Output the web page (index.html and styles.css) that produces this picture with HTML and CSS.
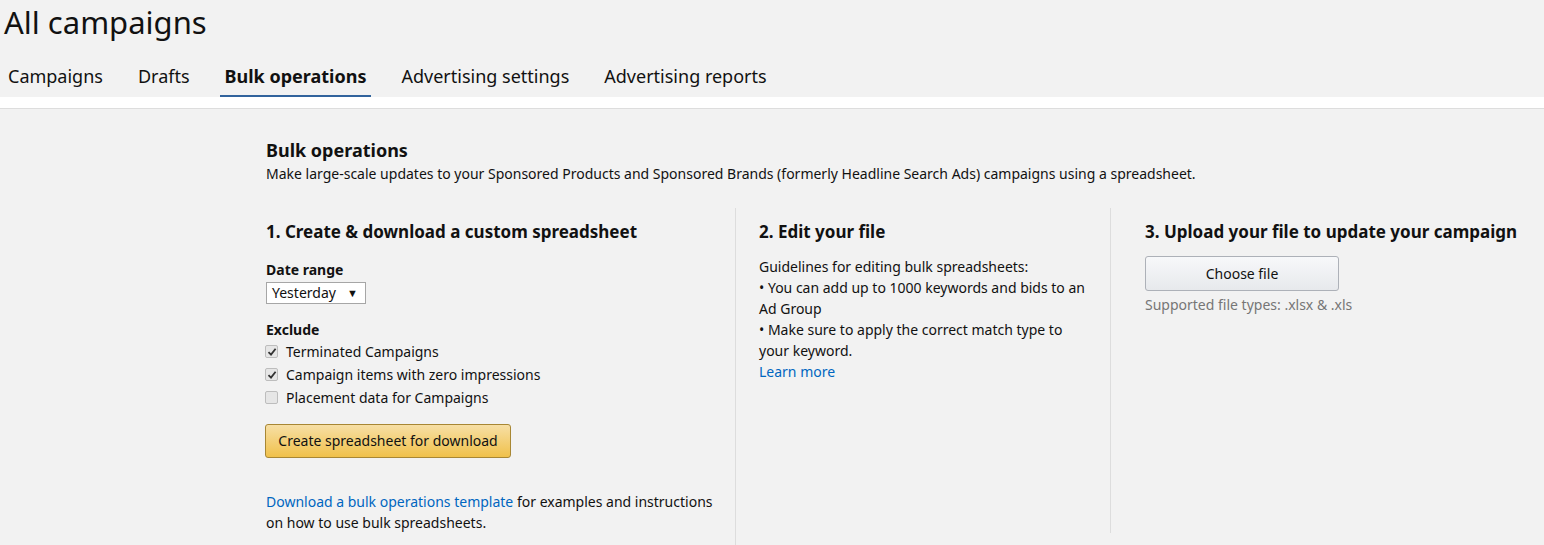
FILE: index.html
```html
<!DOCTYPE html>
<html lang="en">
<head>
<meta charset="utf-8">
<title>All campaigns</title>
<link rel="stylesheet" href="styles.css">
</head>
<body>
<header class="page-header">
  <h1 class="page-title">All campaigns</h1>
  <nav class="tabs">
    <a class="tab">Campaigns</a>
    <a class="tab">Drafts</a>
    <a class="tab tab-active">Bulk operations</a>
    <a class="tab">Advertising settings</a>
    <a class="tab">Advertising reports</a>
  </nav>
</header>
<div class="band"></div>
<main class="content">
  <h2 class="section-title">Bulk operations</h2>
  <p class="section-desc">Make large-scale updates to your Sponsored Products and Sponsored Brands (formerly Headline Search Ads) campaigns using a spreadsheet.</p>
  <div class="columns">
    <section class="col col-1">
      <h3 class="col-title">1. Create &amp; download a custom spreadsheet</h3>
      <div class="field-label">Date range</div>
      <div class="select"><span>Yesterday</span><span class="arrow">&#9660;</span></div>
      <div class="field-label exclude">Exclude</div>
      <div class="check-row"><span class="box checked"><svg viewBox="0 0 10 10" width="10" height="10"><path d="M1.5 5.2 L4 7.6 L8.6 1.8" fill="none" stroke="#333" stroke-width="1.8"/></svg></span>Terminated Campaigns</div>
      <div class="check-row"><span class="box checked"><svg viewBox="0 0 10 10" width="10" height="10"><path d="M1.5 5.2 L4 7.6 L8.6 1.8" fill="none" stroke="#333" stroke-width="1.8"/></svg></span>Campaign items with zero impressions</div>
      <div class="check-row"><span class="box"></span>Placement data for Campaigns</div>
      <button class="btn-primary">Create spreadsheet for download</button>
      <p class="template"><a class="link">Download a bulk operations template</a> for examples and instructions on how to use bulk spreadsheets.</p>
    </section>
    <section class="col col-2">
      <h3 class="col-title">2. Edit your file</h3>
      <p class="guide">Guidelines for editing bulk spreadsheets:<br>&bull; You can add up to 1000 keywords and bids to an Ad Group<br>&bull; Make sure to apply the correct match type to your keyword.<br><a class="link">Learn more</a></p>
    </section>
    <section class="col col-3">
      <h3 class="col-title">3. Upload your file to update your campaign</h3>
      <button class="btn-secondary">Choose file</button>
      <p class="hint">Supported file types: .xlsx &amp; .xls</p>
    </section>
  </div>
</main>
</body>
</html>
```
FILE: styles.css
```css
* { box-sizing: border-box; }
html, body { margin: 0; padding: 0; }
body {
  background: #f2f2f2;
  color: #111;
  font-family: "Noto Sans", "Open Sans", Arial, sans-serif;
  font-size: 14px;
  line-height: 20px;
  overflow: hidden;
}
.page-header { padding: 0 0 0 3px; }
.page-title {
  margin: 0;
  padding-left: 1px;
  font-size: 31px;
  font-weight: 400;
  line-height: 44px;
}
.tabs { display: flex; gap: 25px; margin-top: 13px; }
.tab {
  padding: 8px 5px 8px;
  font-size: 18px;
  line-height: 22px;
  color: #111;
  border-bottom: 2px solid transparent;
}
.tab-active { font-weight: 700; border-bottom-color: #31639c; }
.band { height: 12px; background: #fff; border-bottom: 1px solid #ddd; }
.content { padding: 29px 0 0 266px; }
.section-title { margin: 0; font-size: 18px; line-height: 24px; font-weight: 700; }
.section-desc { margin: 2px 0 0; }
.columns { display: flex; align-items: flex-start; margin-top: 24px; }
.col { padding-top: 12px; }
.col-1 { width: 470px; padding-right: 20px; padding-bottom: 24px; border-right: 1px solid #ddd; }
.col-2 { width: 375px; min-height: 325px; padding-left: 23px; padding-right: 16px; border-right: 1px solid #ddd; }
.col-3 { padding-left: 34px; }
.col-title { margin: 0 0 12px; font-size: 17px; line-height: 24px; font-weight: 700; }
.field-label { font-weight: 700; margin-top: 16px; }
.exclude { margin-top: 16px; }
.select {
  display: flex; align-items: center; justify-content: space-between;
  width: 100px; height: 22px; margin-top: 2px; padding: 0 7px 0 5px;
  background: #fff; border: 1px solid #a6a6a6;
}
.arrow { font-size: 11px; color: #111; }
.check-row { display: flex; align-items: center; height: 23px; }
.box {
  display: inline-flex; align-items: center; justify-content: center;
  width: 13px; height: 13px; margin: 0 8px 0 -1px;
  border: 1px solid #bdbdbd; border-radius: 2px; background: #e6e6e6;
}
.btn-primary {
  display: block; margin-top: 15px; width: 246px; height: 34px; margin-left: -1px;
  font: inherit; color: #111;
  background: linear-gradient(#f7dfa5, #f0c14b);
  border: 1px solid #a88734; border-radius: 3px;
}
.template { margin: 33px 0 0; line-height: 21px; }
.link { color: #0066c0; }
.guide { margin: 0; line-height: 21px; }
.btn-secondary {
  display: block; margin-top: 1px; width: 194px; height: 35px;
  font: inherit; color: #111;
  background: linear-gradient(#f7f8fa, #e7e9ec);
  border: 1px solid #adb1b8; border-radius: 3px;
}
.hint { margin: 4px 0 0; color: #767676; }
```
